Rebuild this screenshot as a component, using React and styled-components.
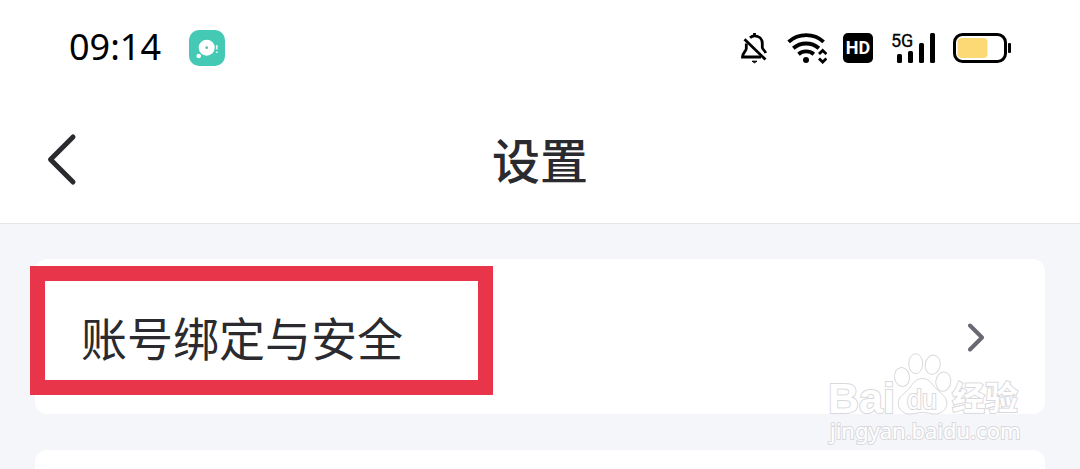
import React from "react";
import styled, { createGlobalStyle } from "styled-components";

const GlobalStyle = createGlobalStyle`
   * {
      box-sizing: border-box;
   }
   body {
      margin: 0;
      background: #f5f6fa;
      font-family: "Noto Sans CJK SC", "Noto Sans", sans-serif;
      color: #2a2a2f;
   }
`;

const Page = styled.div`
   display: flex;
   flex-direction: column;
   min-height: 100vh;
`;

const StatusBar = styled.div`
   display: flex;
   align-items: center;
   justify-content: space-between;
   height: 96px;
   padding: 0 69px;
   background: #fff;
`;

const StatusGroup = styled.div`
   display: flex;
   align-items: center;
   gap: ${(props) => props.$gap}px;
`;

const Time = styled.time`
   font-family: "Noto Sans", sans-serif;
   font-size: 36px;
   line-height: 40px;
   padding-bottom: 2px;
   color: #000;
`;

const HdBadge = styled.span`
   width: 30px;
   height: 30px;
   border-radius: 5px;
   background: #000;
   color: #fff;
   font: 700 18px/30px Roboto, sans-serif;
   display: flex;
   justify-content: center;
`;

const Header = styled.header`
   display: grid;
   grid-template-columns: 1fr auto 1fr;
   align-items: center;
   height: 128px;
   padding: 0 44px;
   background: #fff;
   border-bottom: 1px solid #e4e5e9;
`;

const BackButton = styled.button`
   display: flex;
   justify-self: start;
   padding: 0;
   border: 0;
   background: none;
   cursor: pointer;
`;

const Title = styled.h1`
   margin: 0;
   padding-bottom: 4px;
   font-size: 48px;
   line-height: 64px;
   font-weight: 500;
`;

const Content = styled.main`
   flex: 1;
   display: flex;
   flex-direction: column;
   gap: 36px;
   padding: 35px 35px 0;
`;

const Card = styled.section`
   position: relative;
   border-radius: 12px;
   background: #fff;
`;

const NextCard = styled(Card)`
   flex: 1;
   border-radius: 12px 12px 0 0;
`;

const SettingRow = styled.a`
   display: flex;
   align-items: center;
   justify-content: space-between;
   height: 155px;
   padding: 0 58px 0 46px;
   color: inherit;
   text-decoration: none;
`;

const RowLabel = styled.span`
   padding-bottom: 2px;
   font-size: 46px;
   line-height: 64px;
`;

const Highlight = styled.div`
   position: absolute;
   top: 7px;
   left: -5px;
   width: 463px;
   height: 129px;
   border: 15px solid #e9354a;
   pointer-events: none;
`;

const Watermark = styled.svg`
   position: absolute;
   right: 20px;
   top: 91px;
   pointer-events: none;
   z-index: 1;
   fill: #fff;
   stroke: #d9d9dd;
   stroke-width: 1;
`;

const WatermarkText = styled.text`
   font-family: ${(props) => props.$font}, sans-serif;
   font-size: ${(props) => props.$size}px;
   font-weight: ${(props) => props.$weight};
   stroke-width: 2px;
   paint-order: stroke;
`;

const NetworkText = styled.text`
   font: 400 18px Roboto, sans-serif;
   stroke: #000;
   stroke-width: 0.3;
`;

const AppBadge = () => (
   <svg width="36" height="36" viewBox="0 0 36 36">
      <rect width="36" height="36" rx="10" fill="#44c9b4" />
      <circle cx="17.7" cy="17.7" r="8" fill="#fff" />
      <circle cx="17.7" cy="17.7" r="1.4" fill="#6fb9aa" />
      <circle cx="9.7" cy="26" r="2.3" fill="#fff" />
      <path d="M27.8 15v4.5M27.8 21.5v1.4" stroke="#d8f5ef" strokeWidth="1.8" />
   </svg>
);

const MutedBell = () => (
   <svg width="30" height="32" viewBox="0 0 30 32" fill="none" stroke="#000" strokeWidth="2.8">
      <path d="M11 5.8C12.4 4.4 14 3.8 15.6 3.8c4.6 0 7.7 3.2 7.7 7.6v4.2c0 1.8 2.6 2.6 3.4 5.4" />
      <path d="M15.5 1v3" />
      <path d="M7.3 11.5v5c0 2.7-3.6 4-3.8 8.5H22" />
      <path d="M5.5 7.3 26.5 27.6" />
      <path d="M13 29.2h5l-2.5 1.6z" fill="#000" strokeWidth="1" />
   </svg>
);

const Wifi = () => (
   <svg width="42" height="32" viewBox="0 0 42 32" fill="none" stroke="#000" strokeWidth="3.8">
      <path d="M3.6 9.8C13.5.8 29 .8 38.6 9.8" />
      <path d="M8.3 16.3c7.3-6.4 18.3-6.4 25.6 0" />
      <path d="M13.5 22.2c4.3-3.7 11-3.7 15.3 0" />
      <circle cx="21" cy="28" r="3" fill="#000" stroke="none" />
      <path d="m34 22 3.7-3.6 3.7 3.6M34 26.5l3.7 3.6 3.7-3.6" strokeWidth="2.8" />
   </svg>
);

const Signal = () => (
   <svg width="48" height="32" viewBox="0 0 48 32" overflow="visible">
      <NetworkText x="2" y="15">
         5G
      </NetworkText>
      <rect x="8" y="22" width="5" height="9" rx="1.5" />
      <rect x="19" y="19" width="5" height="12" rx="1.5" />
      <rect x="30" y="11" width="5" height="20" rx="1.5" />
      <rect x="41" y="1" width="5" height="30" rx="1.5" />
   </svg>
);

const Battery = () => (
   <svg width="58" height="32" viewBox="0 0 58 32">
      <rect x="1.5" y="2.5" width="51" height="27" rx="8" fill="none" stroke="#000" strokeWidth="3" />
      <rect x="4.5" y="6" width="30" height="20" rx="4" fill="#fdd975" />
      <rect x="55" y="11" width="3" height="10" rx="1" />
   </svg>
);

const BackIcon = () => (
   <svg width="36" height="56" viewBox="0 0 36 56" fill="none" stroke="#2a2a2f" strokeWidth="5" strokeLinecap="round" strokeLinejoin="round">
      <path d="M29 5 6.5 27.5 29 50" />
   </svg>
);

const RowArrow = () => (
   <svg width="20" height="30" viewBox="0 0 20 30" fill="none" stroke="#6a6873" strokeWidth="4" strokeLinecap="round" strokeLinejoin="round">
      <path d="M3 3.500 15 15.500 3 27.500" />
   </svg>
);

const BaiduWatermark = () => (
   <Watermark width="200" height="100" viewBox="0 0 200 100">
      <WatermarkText x="3" y="63" $font="Liberation Sans" $size={43} $weight={700}>
         Bai
      </WatermarkText>
      <ellipse cx="77" cy="27" rx="7.5" ry="9.5" transform="rotate(-10 77 27)" />
      <ellipse cx="90.7" cy="13.7" rx="7" ry="10" />
      <ellipse cx="107.7" cy="14.7" rx="7.5" ry="9.7" transform="rotate(10 107.7 14.7)" />
      <ellipse cx="118.3" cy="31.7" rx="7.5" ry="9.7" transform="rotate(8 118.3 31.7)" />
      <path d="M97.3 28.5c-8 0-10 7-14 11-5 5-10 7-10 14 0 6 5 10.5 11 10.5 5 0 8-1.5 13-1.5s8 1.5 13 1.5c6 0 11.5-4.5 11.5-10.5 0-7-5-9-10-14-4-4-6.5-11-14.500-11z" />
      <WatermarkText x="82" y="59" $font="Liberation Sans" $size={27} $weight={400}>
         du
      </WatermarkText>
      <WatermarkText x="127" y="60" $font="Noto Sans CJK SC" $size={33} $weight={700}>
         经验
      </WatermarkText>
      <WatermarkText x="5" y="89" $font="Noto Sans" $size={22} $weight={400}>
         jingyan.baidu.com
      </WatermarkText>
   </Watermark>
);

function App() {
   return (
      <>
         <GlobalStyle />
         <Page>
            <StatusBar>
               <StatusGroup $gap={28}>
                  <Time>09:14</Time>
                  <AppBadge />
               </StatusGroup>
               <StatusGroup $gap={16}>
                  <MutedBell />
                  <Wifi />
                  <HdBadge>HD</HdBadge>
                  <Signal />
                  <Battery />
               </StatusGroup>
            </StatusBar>

            <Header>
               <BackButton type="button" aria-label="返回">
                  <BackIcon />
               </BackButton>
               <Title>设置</Title>
            </Header>

            <Content>
               <Card>
                  <SettingRow href="#security">
                     <RowLabel>账号绑定与安全</RowLabel>
                     <RowArrow />
                  </SettingRow>
                  <Highlight />
                  <BaiduWatermark />
               </Card>
               <NextCard />
            </Content>
         </Page>
      </>
   );
}

export default App;
